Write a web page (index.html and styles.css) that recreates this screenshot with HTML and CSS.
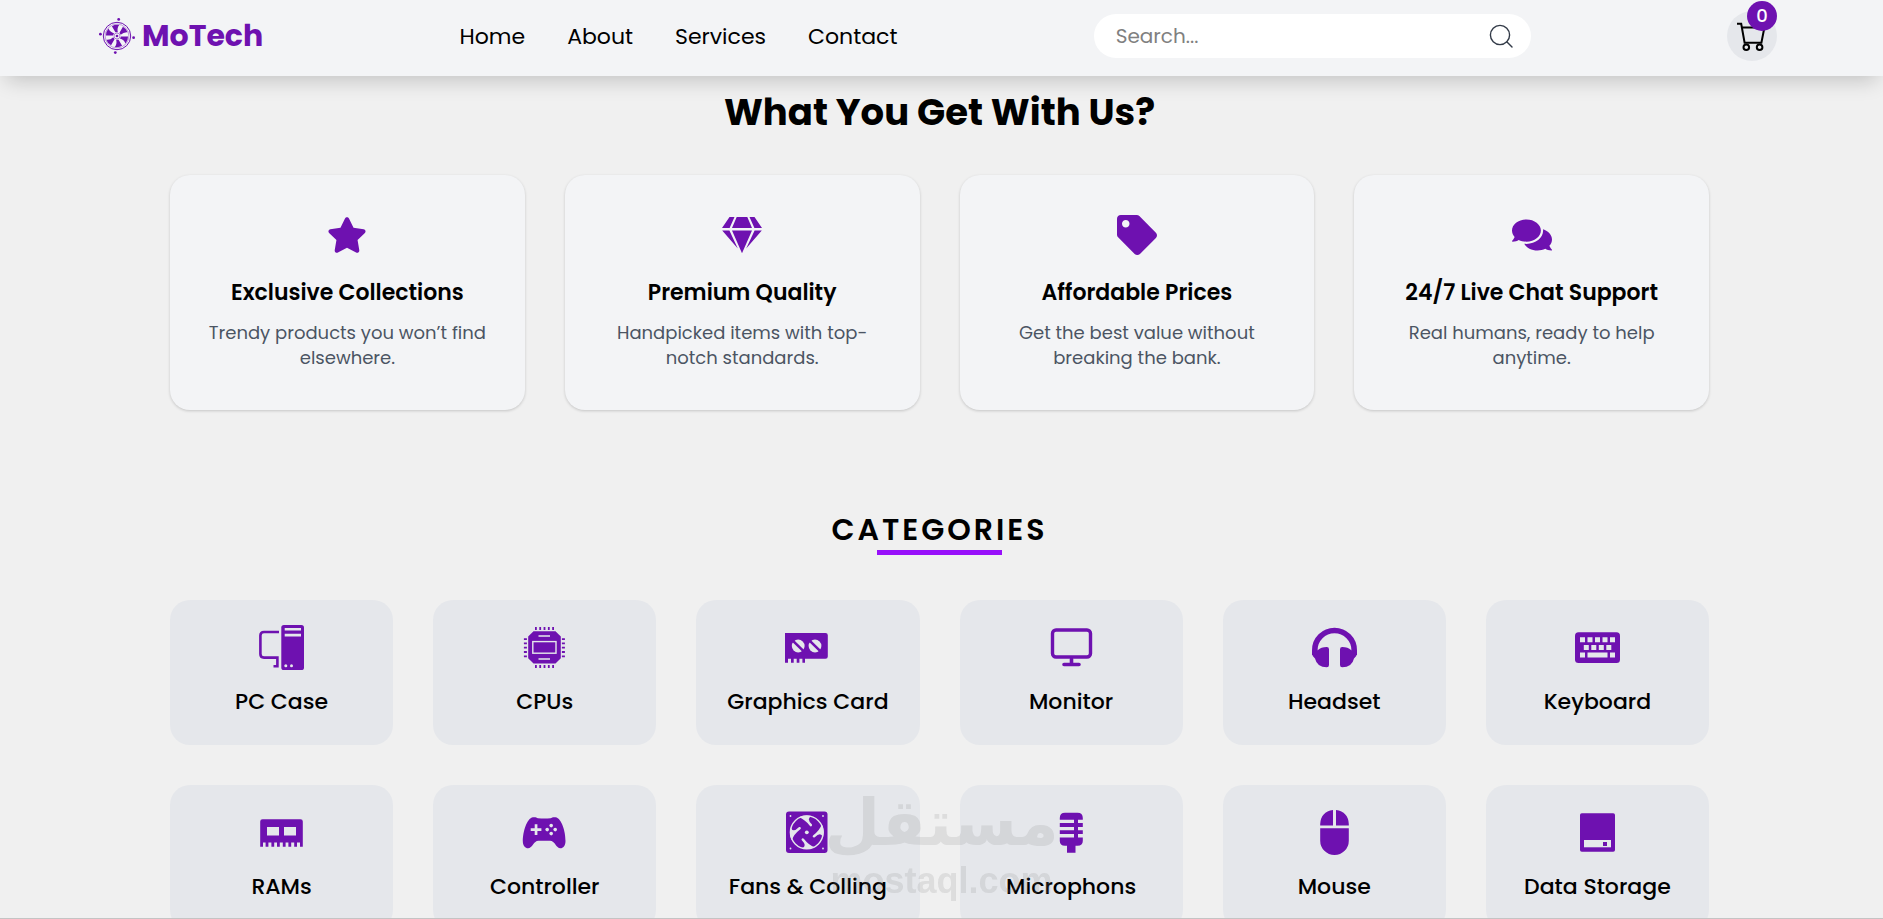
FILE: index.html
```
<!DOCTYPE html>
<html lang="en">
<head>
  <meta charset="UTF-8" />
  <meta name="viewport" content="width=device-width, initial-scale=1.0"/>
  <title>MoTech</title>
  <link rel="stylesheet" href="styles.css">
</head>
<body>
  <header class="navbar">
    <a href="#" class="logo">
      <svg viewBox="0 0 36 36" aria-hidden="true">
        <g fill="none" stroke="currentColor">
          <circle cx="18" cy="18" r="13.7" stroke-width="1"/>
          <circle cx="18" cy="18" r="11.9" stroke-width=".4"/>
        </g>
        <g fill="currentColor">
          <path id="blade" d="M16.4 14.2L12.9 8.2Q16.2 6.2 20.2 6.9Q17.8 10 18.8 14.2z"/>
          <use href="#blade" transform="rotate(60 18 18)"/>
          <use href="#blade" transform="rotate(120 18 18)"/>
          <use href="#blade" transform="rotate(180 18 18)"/>
          <use href="#blade" transform="rotate(240 18 18)"/>
          <use href="#blade" transform="rotate(300 18 18)"/>
          <circle cx="18" cy="18" r="1.3"/>
          <circle cx="19.7" cy="1.4" r="1.4"/>
          <circle cx="34.6" cy="19.7" r="1.4"/>
          <circle cx="16.3" cy="34.6" r="1.4"/>
          <circle cx="1.4" cy="16.2" r="1.4"/>
        </g>
        <circle cx="18" cy="18" r="3" fill="none" stroke="currentColor" stroke-width=".5"/>
      </svg>
      <span>MoTech</span>
    </a>

    <nav class="nav-links">
      <a href="#home">Home</a>
      <a href="#about">About</a>
      <a href="#services">Services</a>
      <a href="#contact">Contact</a>
    </nav>

    <form class="search">
      <input type="text" placeholder="Search..." aria-label="Search">
      <button type="submit" aria-label="Search">
        <svg viewBox="0 0 24 24" fill="none" stroke="currentColor" stroke-width="1.4" stroke-linecap="round">
          <circle cx="11" cy="11" r="9.6"/>
          <path d="M18 18l5 5"/>
        </svg>
      </button>
    </form>

    <button class="cart" type="button" aria-label="Cart">
      <svg viewBox="0 0 28 28" fill="none" stroke="currentColor" stroke-width="2">
        <path d="M-1 1.7H3.2L6.6 20.7H23.4L26.4 5.4H4"/>
        <circle cx="8.3" cy="25.2" r="2.8"/>
        <circle cx="21.6" cy="25.2" r="2.8"/>
      </svg>
      <span class="badge">0</span>
    </button>
  </header>

  <main>
    <section class="features" id="about">
      <h1>What You Get With Us?</h1>
      <div class="feature-grid">
        <div class="feature-card">
          <svg class="feature-icon" viewBox="0 0 576 512"><path d="M259.3 17.8L194 150.2 47.9 171.5c-26.2 3.8-36.7 36.1-17.7 54.6l105.7 103-25 145.5c-4.5 26.3 23.2 46 46.4 33.7L288 439.6l130.7 68.7c23.2 12.2 50.9-7.4 46.4-33.7l-25-145.5 105.7-103c19-18.5 8.5-50.8-17.7-54.6L382 150.2 316.7 17.8c-11.7-23.6-45.6-23.9-57.4 0z"/></svg>
          <h3>Exclusive Collections</h3>
          <p>Trendy products you won’t find elsewhere.</p>
        </div>
        <div class="feature-card">
          <svg class="feature-icon" viewBox="0 0 40 40"><path d="M7.5 2H12.5L7.6 12.9H0zM14.7 2H25.3L30 12.9H10zM27.5 2H32.5L40 12.9H32.4zM.2 15.4H7.4L15.8 33.6zM10 15.4H30L20 38.2zM32.6 15.4H39.8L24.2 33.6z"/></svg>
          <h3>Premium Quality</h3>
          <p>Handpicked items with top-notch standards.</p>
        </div>
        <div class="feature-card">
          <svg class="feature-icon" viewBox="0 0 512 512"><path d="M0 252.118V48C0 21.49 21.49 0 48 0h204.118a48 48 0 0 1 33.941 14.059l211.882 211.882c18.745 18.745 18.745 49.137 0 67.882L293.823 497.941c-18.745 18.745-49.137 18.745-67.882 0L14.059 286.059A48 48 0 0 1 0 252.118zM112 64c-26.51 0-48 21.49-48 48s21.49 48 48 48 48-21.49 48-48-21.49-48-48-48z"/></svg>
          <h3>Affordable Prices</h3>
          <p>Get the best value without breaking the bank.</p>
        </div>
        <div class="feature-card">
          <svg class="feature-icon" viewBox="0 0 576 512"><path d="M416 192c0-88.4-93.1-160-208-160S0 103.6 0 192c0 34.3 14.1 65.9 38 92-13.4 30.2-35.5 54.2-35.8 54.5-2.2 2.3-2.8 5.7-1.5 8.7S4.8 352 8 352c36.6 0 66.9-12.3 88.7-25 32.2 15.7 70.3 25 111.3 25 114.9 0 208-71.6 208-160zm122 220c23.9-26 38-57.7 38-92 0-66.9-53.5-124.2-129.3-148.1.9 6.6 1.3 13.3 1.3 20.1 0 105.9-107.7 192-240 192-10.8 0-21.3-.8-31.7-1.9C207.8 439.6 281.8 480 368 480c41 0 79.1-9.2 111.3-25 21.8 12.7 52.1 25 88.7 25 3.2 0 6.1-1.9 7.3-4.8 1.3-2.9.7-6.3-1.5-8.7-.3-.2-22.4-24.2-35.8-54.5z"/></svg>
          <h3>24/7 Live Chat Support</h3>
          <p>Real humans, ready to help anytime.</p>
        </div>
      </div>
    </section>

    <section class="categories" id="services">
      <h2>CATEGORIES</h2>
      <div class="category-grid">
        <a href="#" class="category-card">
          <svg viewBox="0 0 45 45">
            <path fill="none" stroke="currentColor" stroke-width="2.6" d="M20 7H5Q1.4 7 1.4 10.6V29Q1.4 32.6 5 32.6H18.4V41.2H14.5"/>
            <rect x="22.3" width="22.7" height="45" rx="2.6"/>
            <path class="cut" d="M25.7 3H42v2.6H25.7zM25.7 8.8H42v2.6H25.7z"/>
            <circle class="cut" cx="26.8" cy="40.8" r="1.5"/>
            <circle class="cut" cx="32.5" cy="40.8" r="1.5"/>
          </svg>
          <span>PC Case</span>
        </a>
        <a href="#" class="category-card">
          <svg viewBox="0 0 45 45">
            <path d="M11.5 6.3h22l5.3 5.3v21.6l-5.3 5.3h-22l-5.3-5.3V11.6z"/>
            <g fill="none" stroke="currentColor" stroke-width="3" stroke-dasharray="1.8 2.5">
              <path d="M13 3.4h20M13 41.5h20"/>
              <path d="M3.4 13.2v20M41.4 13.2v20"/>
            </g>
            <rect class="cut-line" x="10.8" y="16.6" width="23.2" height="11.6"/>
            <path class="cut-line" d="M16.5 11H28M16.5 34H28"/>
          </svg>
          <span>CPUs</span>
        </a>
        <a href="#" class="category-card">
          <svg viewBox="0 0 45 45">
            <path d="M0 8H40.5Q42.8 8 42.8 10.3V31.4Q42.8 33.7 40.5 33.7H20V37.7H17.4V33.7H14.4V37.7H11.7V33.7H8.7V37.7H6V33.7H3V37.7H0z"/>
            <circle class="cut" cx="13.2" cy="21" r="6.4"/>
            <circle class="cut" cx="30" cy="21" r="6.4"/>
            <path stroke="currentColor" stroke-width="2.6" d="M7.5 15.3L19 26.7M24.3 15.3L35.8 26.7"/>
          </svg>
          <span>Graphics Card</span>
        </a>
        <a href="#" class="category-card">
          <svg viewBox="0 0 45 45">
            <rect x="3.5" y="5" width="38" height="27" rx="3.5" fill="none" stroke="currentColor" stroke-width="3.4"/>
            <path fill="none" stroke="currentColor" stroke-width="3.6" stroke-linecap="round" d="M22.5 34v5M15 39.5H30"/>
          </svg>
          <span>Monitor</span>
        </a>
        <a href="#" class="category-card">
          <svg viewBox="0 0 45 45">
            <path fill="none" stroke="currentColor" stroke-width="5.6" d="M2.8 30V25.2a19.7 19.7 0 0 1 39.4 0V30"/>
            <path d="M17 24.2Q17 22 14.8 22Q9 22 6 25L0 28Q0 31 3 33.5Q5 42.3 14.8 42.3Q17 42.3 17 40zM28 24.2Q28 22 30.2 22Q36 22 39 25L45 28Q45 31 42 33.5Q40 42.3 30.2 42.3Q28 42.3 28 40z"/>
          </svg>
          <span>Headset</span>
        </a>
        <a href="#" class="category-card">
          <svg viewBox="0 0 45 45">
            <rect y="7.3" width="45" height="30.7" rx="3.5"/>
            <path class="cut" d="M5 12.2h5v5H5zM12.5 12.2h5v5h-5zM20 12.2h5v5h-5zM27.5 12.2h5v5h-5zM35 12.2h5v5h-5zM8.8 20h5v5h-5zM16.3 20h5v5h-5zM23.8 20h5v5h-5zM31.3 20h5v5h-5zM5 27.6h5v5H5zM12.5 27.6h20v5h-20zM35 27.6h5v5h-5z"/>
          </svg>
          <span>Keyboard</span>
        </a>
        <a href="#" class="category-card">
          <svg viewBox="0 0 45 45">
            <path d="M3.5 9.3H41.5Q43.8 9.3 43.8 11.6V36.7H41V32.5H38V36.7H35.2V32.5H32.2V36.7H29.4V32.5H26.6V36.7H23.8V32.5H20.8V36.7H18V32.5H15.2V36.7H12.4V32.5H9.4V36.7H6.6V32.5H4V36.7H1.2V11.6Q1.2 9.3 3.5 9.3z"/>
            <path class="cut" d="M8 17h12v8.5H8zM25 17h12v8.5H25z"/>
          </svg>
          <span>RAMs</span>
        </a>
        <a href="#" class="category-card">
          <svg viewBox="0 0 45 45">
            <path d="M11 7.3C13 6.8 14.5 7.5 16 8.2Q22.5 9 28.5 8.2C30 7.5 31.5 6.8 33.5 7.3C40 8.5 43.5 22 43.5 31C43.5 36 41 38.3 38.5 38.3C34 38.3 33 30.8 28 30.8H16.5C11.5 30.8 10.5 38.3 6 38.3C3.5 38.3.8 36 .8 31C1 22 4.5 8.5 11 7.3z"/>
            <path class="cut" d="M12.7 14.3h2.7v4h4V21h-4v4h-2.7v-4h-4v-2.7h4z"/>
            <g class="cut"><circle cx="29.2" cy="15.6" r="1.8"/><circle cx="29.2" cy="23.6" r="1.8"/><circle cx="25.2" cy="19.6" r="1.8"/><circle cx="33.2" cy="19.6" r="1.8"/></g>
          </svg>
          <span>Controller</span>
        </a>
        <a href="#" class="category-card">
          <svg viewBox="0 0 45 45">
            <rect x="1" y="1.5" width="41.5" height="41.5" rx="3"/>
            <g class="cut"><circle cx="5.5" cy="6" r=".9"/><circle cx="38" cy="6" r=".9"/><circle cx="5.5" cy="38.5" r=".9"/><circle cx="38" cy="38.5" r=".9"/><circle cx="21.8" cy="22.3" r="1.9"/></g>
            <circle class="cut-line" cx="21.8" cy="22.3" r="16.4"/>
            <g class="cut" transform="translate(21.8 22.3)">
              <path id="slit" d="M-8-15Q-2-13 3-6.5C4-5 6-6.5 5-8Q-1-14 5-16Q-2-18-8-15z"/>
              <use href="#slit" transform="rotate(90)"/>
              <use href="#slit" transform="rotate(180)"/>
              <use href="#slit" transform="rotate(270)"/>
            </g>
          </svg>
          <span>Fans &amp; Colling</span>
        </a>
        <a href="#" class="category-card">
          <svg viewBox="0 0 45 45">
            <path d="M10.8 9.7V8Q10.8 2.7 16 2.7H28.5Q33.8 2.7 33.8 8V9.7H29V13H33.8V17H29V20.3H33.8V24H29V27.5H33.8V31Q33.8 35.7 28.5 35.7H26.5V42.7H18V35.7H16Q10.8 35.7 10.8 31V27.5H25V24H10.8V20.3H25V17H10.8V13H25V9.7z"/>
          </svg>
          <span>Microphons</span>
        </a>
        <a href="#" class="category-card">
          <svg viewBox="0 0 45 45">
            <path d="M21 0V15.5H8.2V14Q8.8 1.8 21 0zM24 0V15.5H36.8V14Q36.2 1.8 24 0zM8.2 18.2H36.8V30.7a14.3 14.3 0 0 1-28.6 0z"/>
          </svg>
          <span>Mouse</span>
        </a>
        <a href="#" class="category-card">
          <svg viewBox="0 0 45 45">
            <rect x="5" y="3.3" width="35" height="38.4" rx="1.8"/>
            <path class="cut" d="M9 30H36v7.3H9z"/>
            <path d="M28 32h4v4h-4z"/>
          </svg>
          <span>Data Storage</span>
        </a>
      </div>
    </section>
  </main>

  <div class="watermark" aria-hidden="true">
    <span class="watermark-ar" lang="ar">مستقل</span>
    <span class="watermark-en">mostaql.com</span>
  </div>
  <div class="bottom-line"></div>
</body>
</html>
```

FILE: styles.css
```
* { margin: 0; padding: 0; box-sizing: border-box; }

:root {
  --main: #6e11b0;
  --tile: #e5e7eb;
  --light: #f3f4f6;
}

html {
  background: #f0f0f0;
  scrollbar-width: none;
}

body {
  font-family: Poppins, Inter, sans-serif;
  color: #000;
}

a {
  color: inherit;
  text-decoration: none;
}

button {
  border: none;
  background: none;
  font: inherit;
  cursor: pointer;
}

/* navbar */
.navbar {
  position: sticky;
  top: 0;
  z-index: 10;
  display: flex;
  justify-content: space-between;
  align-items: center;
  height: 76px;
  padding: 0 106px 4px 99px;
  background: var(--light);
  box-shadow: 0 10px 20px -6px rgba(0, 0, 0, 0.2);
}

.logo {
  display: flex;
  align-items: center;
  gap: 7px;
  color: var(--main);
  font-size: 30px;
  font-weight: 700;
}

.logo svg {
  width: 36px;
  height: 36px;
}

.nav-links {
  display: flex;
  gap: 42px;
  font-size: 22px;
}

.search {
  display: flex;
  align-items: center;
  width: 437px;
  height: 44px;
  padding: 0 18px 0 22px;
  background: #fff;
  border-radius: 22px;
}

.search input {
  flex: 1;
  min-width: 0;
  border: none;
  outline: none;
  background: none;
  font: inherit;
  font-size: 20px;
}

.search input::placeholder {
  color: #808080;
}

.search button {
  display: flex;
  color: #333b48;
}

.search svg {
  width: 24px;
  height: 24px;
}

.cart {
  position: relative;
  display: flex;
  align-items: center;
  justify-content: center;
  width: 50px;
  height: 50px;
  border-radius: 50%;
  background: var(--tile);
}

.cart svg {
  width: 28px;
  height: 28px;
  overflow: visible;
}

.badge {
  position: absolute;
  top: -10px;
  right: 0;
  width: 30px;
  height: 30px;
  border-radius: 50%;
  background: var(--main);
  color: #fff;
  font-size: 18px;
  font-weight: 500;
  line-height: 30px;
  text-align: center;
}

main {
  padding: 0 174px 60px 170px;
}

/* what you get */
.features {
  padding-top: 11px;
}

.features h1 {
  margin-bottom: 38px;
  font-size: 37px;
  font-weight: 700;
  line-height: 50px;
  text-align: center;
}

.feature-grid {
  display: grid;
  grid-template-columns: repeat(4, 1fr);
  gap: 40px;
}

.feature-card {
  padding: 40px 36px;
  border-radius: 20px;
  background: var(--light);
  box-shadow: 0 1px 3px rgba(0, 0, 0, 0.18);
  text-align: center;
}

.feature-icon {
  display: block;
  width: 40px;
  height: 40px;
  margin: 0 auto 20px;
  fill: var(--main);
}

.feature-card h3 {
  margin-bottom: 10px;
  font-size: 22px;
  font-weight: 600;
  line-height: 35px;
}

.feature-card p {
  color: #4b5563;
  font-size: 18px;
  line-height: 25px;
}

/* categories */
.categories {
  padding-top: 100px;
}

.categories h2 {
  margin-bottom: 45px;
  font-size: 30px;
  font-weight: 600;
  line-height: 40px;
  letter-spacing: 3px;
  text-align: center;
}

.categories h2::after {
  content: "";
  display: block;
  width: 125px;
  height: 5px;
  margin: 0 auto;
  background: #9810fa;
}

.category-grid {
  display: grid;
  grid-template-columns: repeat(6, 1fr);
  gap: 40px;
}

.category-card {
  display: flex;
  flex-direction: column;
  align-items: center;
  gap: 14px;
  padding: 25px 0;
  border-radius: 20px;
  background: var(--tile);
  font-size: 22px;
  font-weight: 500;
  line-height: 36px;
}

.category-card svg {
  width: 45px;
  height: 45px;
  color: var(--main);
  fill: currentColor;
}

.category-card .cut {
  fill: var(--tile);
}

.category-card .cut-line {
  fill: none;
  stroke: var(--tile);
  stroke-width: 1.4;
}

/* watermark over the page */
.watermark {
  position: fixed;
  bottom: 16px;
  left: 0;
  right: 0;
  display: flex;
  flex-direction: column;
  align-items: center;
  color: #808080;
  opacity: 0.17;
  font-weight: 700;
  pointer-events: none;
}

.watermark-ar {
  font-family: "DejaVu Sans", sans-serif;
  font-size: 64px;
  line-height: 72px;
}

.watermark-en {
  font-family: "Liberation Sans", sans-serif;
  font-size: 36px;
  line-height: 44px;
}

.bottom-line {
  position: fixed;
  bottom: 0;
  left: 0;
  right: 0;
  height: 1px;
  background: #c4c4c4;
}
```
